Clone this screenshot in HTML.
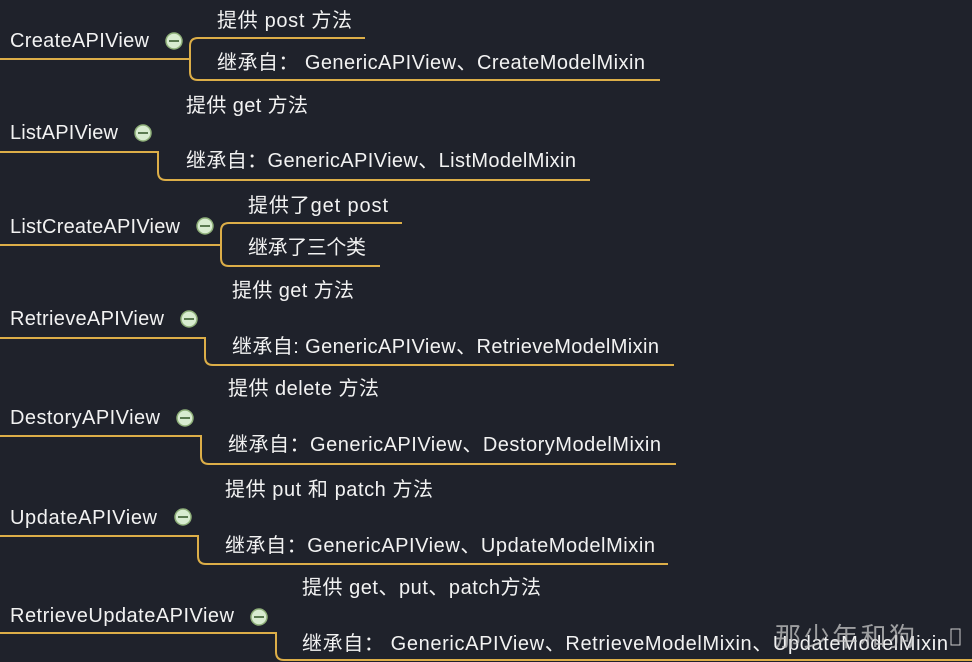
<!DOCTYPE html>
<html><head><meta charset="utf-8"><style>
html,body{margin:0;padding:0;background:#1f222b;width:972px;height:662px;overflow:hidden}
svg{display:block}
text{font-family:"Liberation Sans","Noto Sans CJK SC",sans-serif;font-size:20px;fill:#f2f2f2}
.l{fill:none;stroke:#dcae48;stroke-width:2}
.c{fill:#d8ecd0;stroke:#8fb07a;stroke-width:1.5}
</style></head><body>
<svg width="972" height="662" viewBox="0 0 972 662">
<path class="l" d="M0 59H190M190 59V46Q190 38 198 38H365M190 59V72Q190 80 198 80H660"/>
<circle class="c" cx="174" cy="41" r="8"/><rect x="169" y="40" width="10" height="2" fill="#5a7a50"/>
<text x="10" y="47" textLength="139" lengthAdjust="spacing">CreateAPIView</text>
<text x="217" y="27" textLength="135" lengthAdjust="spacing">提供 post 方法</text>
<text x="217" y="69" textLength="428" lengthAdjust="spacing">继承自： GenericAPIView、CreateModelMixin</text>

<path class="l" d="M0 152H158V172Q158 180 166 180H590"/>
<circle class="c" cx="143" cy="133" r="8"/><rect x="138" y="132" width="10" height="2" fill="#5a7a50"/>
<text x="10" y="139" textLength="108" lengthAdjust="spacing">ListAPIView</text>
<text x="186" y="112" textLength="122" lengthAdjust="spacing">提供 get 方法</text>
<text x="186" y="167" textLength="390" lengthAdjust="spacing">继承自：GenericAPIView、ListModelMixin</text>

<path class="l" d="M0 245H221M221 245V231Q221 223 229 223H402M221 245V258Q221 266 229 266H380"/>
<circle class="c" cx="205" cy="226" r="8"/><rect x="200" y="225" width="10" height="2" fill="#5a7a50"/>
<text x="10" y="233" textLength="170" lengthAdjust="spacing">ListCreateAPIView</text>
<text x="248" y="212" textLength="140" lengthAdjust="spacing">提供了get post</text>
<text x="248" y="254" textLength="118" lengthAdjust="spacing">继承了三个类</text>

<path class="l" d="M0 338H205V357Q205 365 213 365H674"/>
<circle class="c" cx="189" cy="319" r="8"/><rect x="184" y="318" width="10" height="2" fill="#5a7a50"/>
<text x="10" y="325" textLength="154" lengthAdjust="spacing">RetrieveAPIView</text>
<text x="232" y="297" textLength="122" lengthAdjust="spacing">提供 get 方法</text>
<text x="232" y="353" textLength="427" lengthAdjust="spacing">继承自: GenericAPIView、RetrieveModelMixin</text>

<path class="l" d="M0 436H201V456Q201 464 209 464H676"/>
<circle class="c" cx="185" cy="418" r="8"/><rect x="180" y="417" width="10" height="2" fill="#5a7a50"/>
<text x="10" y="424" textLength="150" lengthAdjust="spacing">DestoryAPIView</text>
<text x="228" y="395" textLength="151" lengthAdjust="spacing">提供 delete 方法</text>
<text x="228" y="451" textLength="433" lengthAdjust="spacing">继承自：GenericAPIView、DestoryModelMixin</text>

<path class="l" d="M0 536H198V556Q198 564 206 564H668"/>
<circle class="c" cx="183" cy="517" r="8"/><rect x="178" y="516" width="10" height="2" fill="#5a7a50"/>
<text x="10" y="524" textLength="147" lengthAdjust="spacing">UpdateAPIView</text>
<text x="225" y="496" textLength="208" lengthAdjust="spacing">提供 put 和 patch 方法</text>
<text x="225" y="552" textLength="430" lengthAdjust="spacing">继承自：GenericAPIView、UpdateModelMixin</text>

<path class="l" d="M0 633H276V652Q276 660 284 660H972"/>
<circle class="c" cx="259" cy="617" r="8"/><rect x="254" y="616" width="10" height="2" fill="#5a7a50"/>
<text x="10" y="622" textLength="224" lengthAdjust="spacing">RetrieveUpdateAPIView</text>
<text x="302" y="594" textLength="239" lengthAdjust="spacing">提供 get、put、patch方法</text>
<text x="302" y="650" textLength="646" lengthAdjust="spacing">继承自： GenericAPIView、RetrieveModelMixin、UpdateModelMixin</text>
<text x="775" y="646" textLength="140" lengthAdjust="spacing" style="font-size:26px;fill:#c8c8c8;opacity:.75">那少年和狗</text>
<rect x="951" y="629" width="9" height="16" fill="none" stroke="#ccc" stroke-width="1"/>
</svg>
</body></html>
